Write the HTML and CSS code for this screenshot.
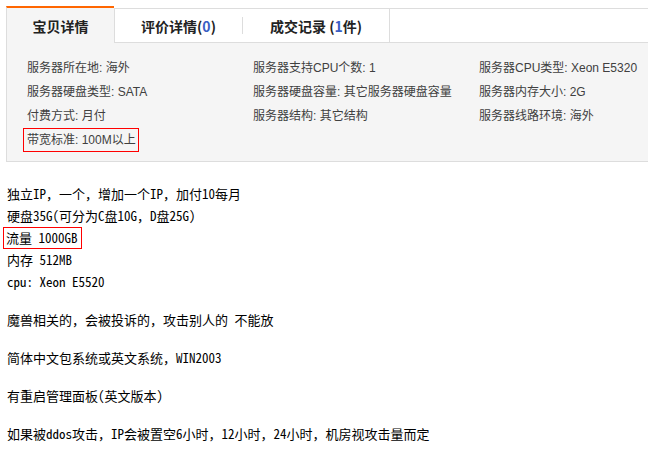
FILE: index.html
```html
<!DOCTYPE html>
<html lang="zh-CN">
<head>
<meta charset="utf-8">
<title>宝贝详情</title>
<link rel="stylesheet" href="styles.css">
</head>
<body>
<div class="detail">
  <div class="tabbar">
    <div class="tab active">宝贝详情</div>
    <div class="tabrest">
      <div class="tab t2">评价详情(<em>0</em>)</div>
      <span class="sep"></span>
      <div class="tab t3">成交记录 (<em>1</em>件)</div>
    </div>
  </div>
  <ul class="attrs">
    <li>服务器所在地: 海外</li>
    <li>服务器支持CPU个数: 1</li>
    <li>服务器CPU类型: Xeon E5320</li>
    <li>服务器硬盘类型: SATA</li>
    <li>服务器硬盘容量: 其它服务器硬盘容量</li>
    <li>服务器内存大小: 2G</li>
    <li>付费方式: 月付</li>
    <li>服务器结构: 其它结构</li>
    <li>服务器线路环境: 海外</li>
    <li><span class="hl">带宽标准: 100M以上</span></li>
  </ul>
</div>
<div class="desc">
  <div class="specs">
    <div>独立IP，一个，增加一个IP，加付10每月</div>
    <div>硬盘35G(可分为C盘10G，D盘25G)</div>
    <div class="flag">流量 1000GB</div>
    <div>内存 512MB</div>
    <div>cpu: Xeon E5520</div>
  </div>
  <p>魔兽相关的，会被投诉的，攻击别人的 不能放</p>
  <p>简体中文包系统或英文系统，WIN2003</p>
  <p>有重启管理面板(英文版本)</p>
  <p>如果被ddos攻击，IP会被置空6小时，12小时，24小时，机房视攻击量而定</p>
</div>
</body>
</html>
```

FILE: styles.css
```css
body {
  margin: 0;
  background: #fff;
  font-family: "Liberation Sans", "Noto Sans CJK SC", sans-serif;
}

.detail {
  margin: 6px 0 0 6px;
}

.tabbar {
  display: flex;
  height: 37px;
}

.tab {
  display: flex;
  align-items: center;
  justify-content: center;
  font-family: "Noto Sans CJK SC", sans-serif;
  font-weight: bold;
  font-size: 14px;
  color: #222;
}

.tab em {
  font-style: normal;
  color: #3a5fc4;
}

.tab.active {
  box-sizing: border-box;
  width: 108px;
  border-top: 2px solid #ff6600;
  border-left: 1px solid #ddd;
  background: #f5f5f5;
}

.tabrest {
  flex: 1;
  margin-top: 2px;
  border-top: 1px solid #ddd;
  border-bottom: 1px solid #ddd;
  border-left: 1px solid #ddd;
  background: #fff;
  display: flex;
}

.t2 {
  width: 127px;
}

.sep {
  align-self: center;
  width: 1px;
  height: 17px;
  background: #ddd;
}

.t3 {
  width: 146px;
  border-right: 1px solid #ddd;
}

.attrs {
  list-style: none;
  margin: 0;
  padding: 13px 0 9px 20px;
  border-left: 1px solid #ddd;
  border-bottom: 1px solid #ddd;
  background: #f5f5f5;
  display: grid;
  grid-template-columns: 226px 226px 1fr;
  font-size: 12px;
  line-height: 24px;
  color: #404040;
}

.attrs li {
  height: 24px;
  white-space: nowrap;
}

.hl {
  display: inline-block;
  border: 1px solid #f00;
  line-height: 22px;
  padding: 0 2px 0 3px;
  margin-left: -4px;
}

.desc {
  padding: 21px 0 0 7px;
  font-family: "Noto Sans Mono CJK SC", "Noto Sans CJK SC", monospace;
  font-size: 13px;
  line-height: 22px;
  color: #000;
}

.desc p {
  margin: 16px 0 0;
}

.flag {
  width: fit-content;
  border: 1px solid #f00;
  line-height: 20px;
  padding: 0 3px 0 2px;
  margin-left: -4px;
}
```
